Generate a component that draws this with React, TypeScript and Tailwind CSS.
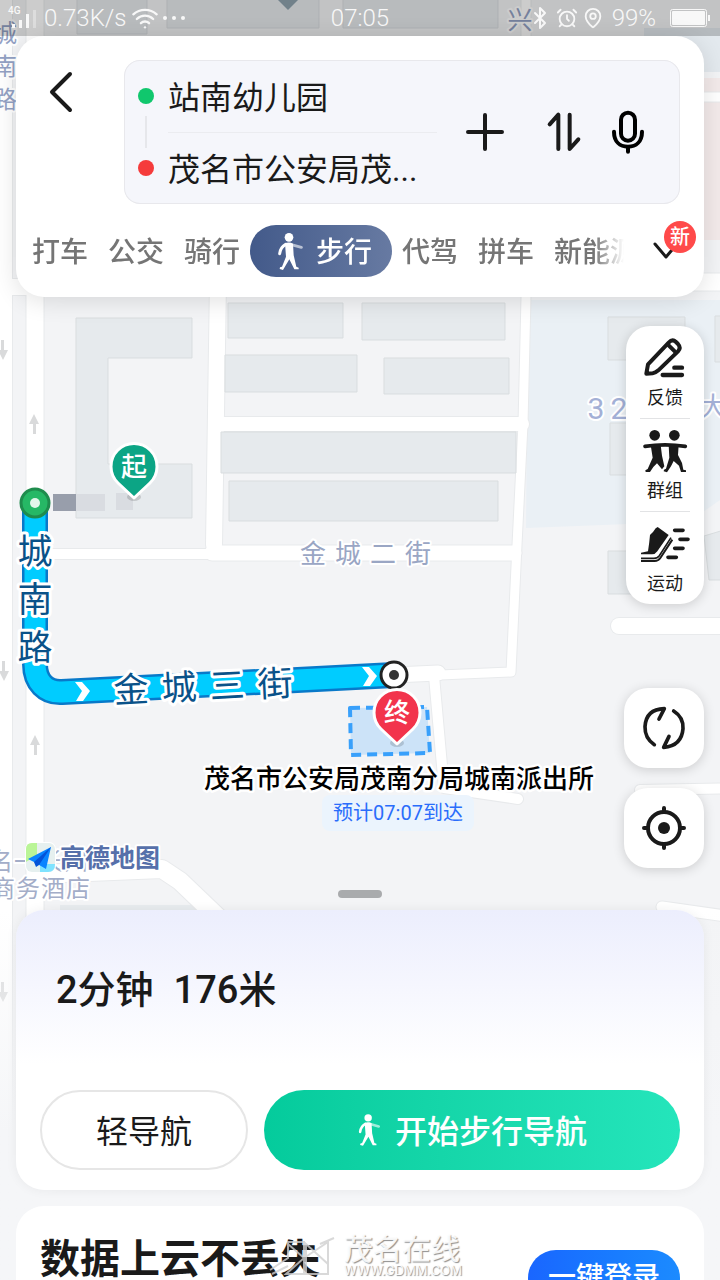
import clsx from 'clsx'
import { AlarmClock, Bluetooth, MapPin, Wifi } from 'lucide-react'
import { useState, type ReactNode } from 'react'

const BUILDINGS = [
  'M77 -10h70v44h-70z',
  'M167 -10h152v38h-152z',
  'M343 -10h155v38h-155z',
  'M76 318h116v40h-84v106h84v54h-116z',
  'M228 303h115v35h-115z',
  'M225 355h132v37h-132z',
  'M362 303h143v37h-143z',
  'M384 358h125v36h-125z',
  'M221 432h295v41h-295z',
  'M229 481h269v40h-269z',
  'M608 317h77v43h-77z',
  'M715 316h20v46h-20z',
  'M610 423h60v52h-60z',
  'M608 551h60v43h-60z',
  'M704 536l20 -6v50h-15z',
]

const ROADS = [
  { d: 'M3 -10V1300', width: 18 },
  { d: 'M35 -10V1300', width: 17 },
  { d: 'M-10 287H40', width: 16 },
  { d: 'M40 554H215', width: 10 },
  { d: 'M218 280L214 545', width: 16 },
  { d: 'M212 553H514', width: 15 },
  { d: 'M222 424H522', width: 14 },
  { d: 'M526 -10L526 297L523 424L517 545L511 672L440 675', width: 9 },
  { d: 'M394 675L438 673', width: 15 },
  { d: 'M434 676L444 788L518 799', width: 10 },
  { d: 'M619 626H740', width: 16 },
  { d: 'M640 790L740 788', width: 10 },
  { d: 'M662 907L740 918', width: 11 },
  { d: 'M690 282H740', width: 17 },
  { d: 'M690 97H740', width: 9 },
  { d: 'M40 874L162 869L180 881L225 924', width: 18 },
]

const MODES = ['打车', '公交', '骑行', '步行', '代驾', '拼车', '新能源']

export default function App() {
  return (
    <div className="relative flex h-screen flex-col overflow-hidden bg-[#f5f6f8] font-['Roboto','Noto_Sans_CJK_SC',sans-serif] text-[#1a1a1a]">
      <MapLayer />
      <StatusBar />
      <RouteHeader />
      <main className="relative flex min-h-0 flex-1 flex-col items-end px-4 pt-[29px]">
        <ToolPanel />
        <div className="mt-auto mb-[22px] flex flex-col gap-5">
          <MapButton label="刷新路线">
            <svg viewBox="120 312 144 144" className="size-12 fill-none stroke-current" strokeWidth="11" strokeLinecap="round" strokeLinejoin="round">
              <path d="M163 434Q134 415 135 380Q138 328 193 326L177 357" />
              <path d="M221 333Q251 352 249 386Q245 438 191 442L207 409" />
            </svg>
          </MapButton>
          <MapButton label="定位">
            <svg viewBox="120 612 144 144" className="size-12 fill-none stroke-current" strokeWidth="12" strokeLinecap="round">
              <circle cx="192" cy="684" r="48" />
              <circle cx="192" cy="684" r="18" className="fill-current" stroke="none" />
              <path d="M192 624v10M192 734v10M132 684h10M242 684h10" />
            </svg>
          </MapButton>
        </div>
        <div className="mb-3 h-2 w-11 self-center rounded-full bg-[#a9abad]" />
      </main>
      <div className="relative flex flex-col gap-4 bg-linear-to-b from-transparent to-[#f5f6f8] to-60% px-4">
        <RouteSummary />
        <CloudBackup />
      </div>
      <Watermark />
    </div>
  )
}

function StatusBar() {
  return (
    <header className="relative flex h-9 shrink-0 items-center bg-black/20 pr-2 pl-2 text-2xl font-light text-[#f8f8f8]">
      <div className="flex flex-1 items-center gap-2">
        <div className="relative flex h-5 items-end gap-1">
          <span className="absolute -top-0.5 left-0 text-[10px] leading-none font-medium">4G</span>
          <span className="ml-1 h-1 w-[3px] bg-current" />
          <span className="h-2 w-[3px] bg-current" />
          <span className="h-3.5 w-[3px] bg-current" />
          <span className="h-4.5 w-[3px] bg-current opacity-40" />
        </div>
        <span>0.73K/s</span>
        <Wifi className="-mx-1 size-7" strokeWidth={2} />
        <span className="flex gap-[5px]">
          <i className="size-1 rounded-full bg-current" />
          <i className="size-1 rounded-full bg-current" />
          <i className="size-1 rounded-full bg-current" />
        </span>
      </div>
      <time>07:05</time>
      <div className="flex flex-1 items-center justify-end gap-1">
        <Bluetooth className="size-6" strokeWidth={2} />
        <AlarmClock className="size-[22px]" strokeWidth={2} />
        <MapPin className="mr-1 size-[22px]" strokeWidth={2} />
        <span>99%</span>
        <svg viewBox="0 0 40 18" className="mr-0.5 ml-2.5 h-[18px] w-10">
          <rect x="0.5" y="0.5" width="36" height="17" rx="2" fill="none" stroke="currentColor" />
          <rect x="2" y="2" width="33" height="14" rx="1" fill="currentColor" />
          <path d="M38 6h2v6h-2z" fill="currentColor" />
        </svg>
      </div>
    </header>
  )
}

function RouteHeader() {
  const [mode, setMode] = useState('步行')
  return (
    <section className="relative mx-4 shrink-0 rounded-[28px] bg-white pt-6 pb-5 shadow-[0_4px_24px_rgba(0,0,0,0.12)]">
      <div className="flex items-start pr-6">
        <button aria-label="返回" className="flex h-16 w-[108px] shrink-0 items-center pl-8">
          <svg viewBox="0 0 26 42" className="h-[42px] w-[26px] fill-none stroke-current" strokeWidth="4" strokeLinecap="round" strokeLinejoin="round">
            <path d="M22 3L4 21L22 39" />
          </svg>
        </button>
        <div className="flex min-w-0 flex-1 items-center rounded-2xl bg-[#f5f6fb] pr-7 ring-1 ring-[#e8e8ec] ring-inset">
          <div className="relative min-w-0 flex-1 pl-3.5">
            <label className="flex h-18 items-center gap-3.5">
              <span className="size-4 shrink-0 rounded-full bg-[#10c76d]" />
              <input aria-label="起点" defaultValue="站南幼儿园" className="min-w-0 flex-1 bg-transparent pt-1 text-[32px] outline-none" />
            </label>
            <div className="absolute top-14 left-[21px] h-8 w-0.5 bg-[#e6e7eb]" />
            <div className="absolute top-18 right-6 left-11 h-px bg-[#ebecf0]" />
            <label className="flex h-18 items-center gap-3.5">
              <span className="size-4 shrink-0 rounded-full bg-[#f53b3b]" />
              <input aria-label="终点" defaultValue="茂名市公安局茂..." className="min-w-0 flex-1 bg-transparent pt-1 text-[32px] outline-none" />
            </label>
          </div>
          <button aria-label="添加途经点" className="mr-[31px]">
            <svg viewBox="303 324 144 144" className="size-12 fill-none stroke-current" strokeWidth="12" strokeLinecap="round">
              <path d="M324 396h102M375 345v102" />
            </svg>
          </button>
          <button aria-label="交换起终点" className="mr-4">
            <svg viewBox="541 324 144 144" className="size-12 fill-none stroke-current" strokeWidth="12" strokeLinecap="round" strokeLinejoin="round">
              <path d="M570 373L596 344V447M630 344V447L656 418" />
            </svg>
          </button>
          <button aria-label="语音输入" className="text-black">
            <svg viewBox="732 324 144 144" className="size-12 fill-none stroke-current" strokeWidth="12" strokeLinecap="round">
              <rect x="783" y="338" width="42" height="84" rx="21" />
              <path d="M762 395C762 425 780 440 804 440S846 425 846 395M804 442V455" />
            </svg>
          </button>
        </div>
      </div>
      <div className="mt-[21px] flex items-center">
        <nav role="tablist" className="flex min-w-0 flex-1 overflow-hidden mask-r-from-95% pl-1.5">
          {MODES.map((name) => (
            <button
              key={name}
              role="tab"
              aria-selected={name === mode}
              onClick={() => setMode(name)}
              className={clsx(
                'flex h-13 shrink-0 items-center text-[28px] font-medium whitespace-nowrap',
                name === mode ? 'gap-3 rounded-full bg-linear-to-r from-[#435a8a] to-[#677aa2] pr-5 pl-[26px] text-white' : 'px-2.5 text-[#757575]',
              )}
            >
              {name === mode && <WalkIcon className="h-[39px] w-7" />}
              <span className="pt-1">{name}</span>
            </button>
          ))}
        </nav>
        <button aria-label="更多出行方式" className="relative ml-6 h-13 w-14">
          <svg viewBox="0 0 28 18" className="ml-1 h-[18px] w-7 fill-none stroke-current" strokeWidth="3" strokeLinecap="round" strokeLinejoin="round">
            <path d="M3 2L14 15L25 2" />
          </svg>
          <span className="absolute -top-1 right-2 flex size-8 items-center justify-center rounded-full bg-[#ff4a4a] text-xl font-medium text-white">新</span>
        </button>
      </div>
    </section>
  )
}

function WalkIcon({ className }: { className?: string }) {
  return (
    <svg viewBox="831 96 84 117" className={className} fill="currentColor" aria-hidden="true">
      <circle cx="870" cy="112" r="13" />
      <path d="M874 133L907 142" stroke="currentColor" strokeWidth="9" strokeLinecap="round" opacity="0.6" />
      <path d="M860 133Q844 142 842 161" stroke="currentColor" strokeWidth="9" strokeLinecap="round" fill="none" />
      <path d="M858 130Q870 124 882 131L884 166L892 200L899 203V208H886L871 178L852 210L842 207L843 202L849 200L861 170Z" />
    </svg>
  )
}

function ToolPanel() {
  return (
    <div className="flex w-[78px] flex-col rounded-3xl bg-white shadow-[0_2px_12px_rgba(0,0,0,0.16)]">
      <ToolButton label="反馈">
        <svg viewBox="120 75 150 150" className="size-[50px] fill-none stroke-current" strokeWidth="12" strokeLinecap="round" strokeLinejoin="round">
          <path d="M139 194L144 166L206 101Q217 89 228 99L234 105Q244 116 234 127L175 184Q166 192 158 193Z" />
          <path d="M203 106L228 131" />
          <path d="M223 176H246M188 198H246" strokeWidth="13" />
        </svg>
      </ToolButton>
      <Divider />
      <ToolButton label="群组">
        <svg viewBox="120 354 150 150" className="size-[50px] fill-current">
          <circle cx="164" cy="379" r="16" />
          <circle cx="223" cy="379" r="16" />
          <path d="M135 412Q195 403 256 412" className="fill-none stroke-current" strokeWidth="11" strokeLinecap="round" />
          <path d="M152 408H182L186 440L193 472L186 481L171 463L160 474L150 489H137L136 484L143 480L158 446Z" />
          <path d="M206 408H236L234 438L246 462L250 482L258 484V489H243L237 470L221 456L213 472L201 490L191 487L192 482L198 479L208 446Z" />
        </svg>
      </ToolButton>
      <Divider />
      <ToolButton label="运动">
        <svg viewBox="120 633 150 150" className="size-[50px] fill-current">
          <path d="M173 654L206 678L172 727Q166 736 156 736H123V731L144 727Q148 702 150 678Q160 670 167 658Z" />
          <path d="M123 748H162Q172 748 178 740L213 686" className="fill-none stroke-current" strokeWidth="5" />
          <path d="M123 756H164Q175 756 181 747L217 692" className="fill-none stroke-current" strokeWidth="6" />
          <path d="M224 664H249M240 691H264M224 718H249M204 745H229" className="stroke-current" strokeWidth="11" strokeLinecap="round" />
        </svg>
      </ToolButton>
    </div>
  )
}

function Divider() {
  return <div className="mx-3.5 h-px bg-[#e2e3e5]" />
}

function ToolButton({ label, children }: { label: string; children: ReactNode }) {
  return (
    <button className="flex flex-col items-center pt-2 pb-1.5">
      {children}
      <span className="text-lg leading-7">{label}</span>
    </button>
  )
}

function MapButton({ label, children }: { label: string; children: ReactNode }) {
  return (
    <button aria-label={label} className="flex size-20 items-center justify-center rounded-3xl bg-white shadow-[0_2px_12px_rgba(0,0,0,0.16)]">
      {children}
    </button>
  )
}

function RouteSummary() {
  return (
    <section className="rounded-[28px] bg-linear-to-b from-[#eceefd] to-white to-55% px-6 pb-5 shadow-[0_0_12px_rgba(0,0,0,0.06)]">
      <h1 className="flex h-[180px] items-center gap-5 px-4 pb-5 text-[38px] font-medium">
        <span>2分钟</span>
        <span>176米</span>
      </h1>
      <div className="flex gap-4">
        <button className="h-20 w-52 rounded-full border-2 border-[#e6e6e6] bg-white pt-1 text-[32px]">轻导航</button>
        <button className="flex h-20 flex-1 items-center justify-center gap-3.5 rounded-full bg-linear-to-r from-[#04cb9c] to-[#24e5bb] text-[32px] font-medium text-white">
          <WalkIcon className="h-[34px] w-6" />
          <span className="pt-1">开始步行导航</span>
        </button>
      </div>
    </section>
  )
}

function CloudBackup() {
  return (
    <section className="flex h-[74px] items-start justify-between rounded-t-[28px] bg-white px-6">
      <h2 className="pt-7 text-[40px] leading-[52px] font-bold">数据上云不丢失</h2>
      <button className="mt-11 h-14 shrink-0 rounded-full bg-linear-to-r from-[#1a66ff] to-[#1c8bff] px-5 text-[28px] font-medium text-white">一键登录</button>
    </section>
  )
}

function Watermark() {
  return (
    <div className="pointer-events-none absolute bottom-1 left-[268px] flex items-end gap-1 text-white/90">
      <svg viewBox="0 0 72 40" className="h-10 w-[72px] fill-none stroke-[#d0d0d0]/80" strokeWidth="2">
        <path d="M2 34L20 22V6H36V38H18L36 22L60 6V38H38V8L60 28M4 38L20 30M36 22L20 8M52 8L66 2" />
      </svg>
      <div className="[text-shadow:1px_1px_1px_#8f8f8f]">
        <div className="text-[29px] leading-7 font-medium">茂名在线</div>
        <div className="font-['Inter'] text-[13px] leading-3">WWW.GDMM.COM</div>
      </div>
    </div>
  )
}

function MapLayer() {
  return (
    <svg viewBox="0 0 720 1280" preserveAspectRatio="xMidYMin slice" className="absolute inset-0 size-full" role="img" aria-label="地图">
      <rect width="720" height="1280" fill="#f3f4f6" />
      <path d="M528 300H720V500L700 514L680 522L526 528Z" fill="#eaf0f5" />
      <path d="M644 28H720V72H644Z" fill="#e3e9ee" />
      <path d="M690 78H720V240H690Z" fill="#f3eaea" />
      <path d="M60 905H200L215 940H60Z" fill="#e8ecef" />
      <g fill="none" strokeLinecap="round" strokeLinejoin="round">
        {ROADS.map((road) => <path key={road.d} d={road.d} stroke="#e8eaec" strokeWidth={road.width + 2} />)}
        {ROADS.map((road) => <path key={road.d} d={road.d} stroke="#ffffff" strokeWidth={road.width} />)}
      </g>
      <g fill="#e6eaed" stroke="#d9dddf">
        {BUILDINGS.map((d) => <path key={d} d={d} />)}
      </g>
      <path d="M274 -4L288 10L302 -4Z" fill="#8ea2ad" />

      <RoadArrow x={3} y={350} down />
      <RoadArrow x={34} y={424} />
      <RoadArrow x={4} y={671} down />
      <RoadArrow x={35} y={745} />
      <RoadArrow x={3} y={992} down />

      <path d="M53 494h23v17h-23z" fill="#989eab" />
      <path d="M76 494h29v17h-29zM116 493h17v17h-17z" fill="#d9dce1" />

      <path d="M350 708L427 707L430 753L351 755Z" fill="#cce3f8" stroke="#38a0fb" strokeWidth="4" strokeDasharray="10 6" strokeLinejoin="round" />

      <g fill="none" strokeLinejoin="round">
        <path d="M35 503V664C35 682 46 693 62 692L394 675" stroke="#0879c9" strokeWidth="26" />
        <path d="M35 503V664C35 682 46 693 62 692L394 675" stroke="#00ccff" strokeWidth="21" />
      </g>
      <path d="M75 682h7l8 9l-7 10h-7l6 -10zM362 667h7l8 9l-7 10h-7l6 -10z" fill="#ffffff" />

      <MapLabel chars="城南路" from={[5, 33]} step={[0, 33]} size={24} color="#93a1c4" />
      <MapLabel chars="兴" from={[520, 20]} step={[0, 0]} size={25} color="#93a1c4" />
      <MapLabel chars="32" from={[596, 408]} step={[23, 0]} size={30} color="#a3b0d6" />
      <MapLabel chars="大" from={[713, 406]} step={[0, 0]} size={26} color="#a3b0d6" />
      <MapLabel chars="金城二街" from={[313, 553]} step={[35, 0]} size={26} color="#9aa6c4" />
      <MapLabel chars="名一长州" from={[1, 861]} step={[25, 0]} size={24} color="#a3adc8" />
      <MapLabel chars="商务酒店" from={[3, 888]} step={[25, 0]} size={24} color="#a3adc8" />
      <MapLabel chars="城南路" from={[35, 551]} step={[0, 48]} size={35} color="#0a5289" />
      <MapLabel chars="金城三街" from={[131, 689]} step={[48, -2]} size={35} color="#0a5289" tilt={-3} />

      <circle cx="35" cy="503" r="14" fill="#26b865" stroke="#1f8c4d" strokeWidth="3" />
      <circle cx="35" cy="503" r="5" fill="#e4f6ea" />
      <circle cx="394" cy="675" r="13" fill="#ffffff" stroke="#222222" strokeWidth="3" />
      <circle cx="394" cy="675" r="5" fill="#333333" />
      <Pin x={134} y={466} color="#0ca585" text="起" />
      <Pin x={397} y={712} color="#f2344c" text="终" />

      <text x="399" y="788" textAnchor="middle" fontSize="26" fontWeight="500" fill="#000000" stroke="#ffffff" strokeWidth="5" strokeLinejoin="round" paintOrder="stroke">
        茂名市公安局茂南分局城南派出所
      </text>
      <rect x="322" y="795" width="152" height="36" rx="8" fill="#ebf4fd" />
      <text x="398" y="820" textAnchor="middle" fontSize="20" fill="#2a6dfb">预计07:07到达</text>

      <AmapLogo />
    </svg>
  )
}

type Point = [number, number]

// Map labels are spread along their road, one glyph per step.
function MapLabel({ chars, from, step, size, color, tilt = 0 }: { chars: string; from: Point; step: Point; size: number; color: string; tilt?: number }) {
  return (
    <g fontSize={size} fill={color} stroke="#ffffff" strokeWidth={size > 30 ? 6 : 4} strokeLinejoin="round" paintOrder="stroke" textAnchor="middle">
      {[...chars].map((char, i) => (
        <text key={i} y={Math.round(size * 0.37)} transform={`translate(${from[0] + step[0] * i} ${from[1] + step[1] * i}) rotate(${tilt})`}>{char}</text>
      ))}
    </g>
  )
}

function RoadArrow({ x, y, down }: { x: number; y: number; down?: boolean }) {
  return (
    <g transform={`translate(${x} ${y}) rotate(${down ? 180 : 0})`} fill="#d9dadb">
      <path d="M0 -10L5 0H-5ZM-1 0H2V10H-1Z" />
    </g>
  )
}

function Pin({ x, y, color, text }: { x: number; y: number; color: string; text: string }) {
  return (
    <g transform={`translate(${x} ${y})`}>
      <ellipse cx="0" cy="31" rx="7" ry="4" fill="#000000" opacity="0.15" />
      <path d="M0 32L-16 17A23 23 0 1 1 16 17Z" fill={color} stroke="#ffffff" strokeWidth="3" strokeLinejoin="round" />
      <text y="10" textAnchor="middle" fontSize="26" fontWeight="500" fill="#ffffff">{text}</text>
    </g>
  )
}

function AmapLogo() {
  return (
    <g>
      <rect x="25" y="842" width="31" height="31" rx="7" fill="#ffffff" />
      <rect x="26" y="843" width="29" height="29" rx="6" fill="#e6f0ef" />
      <path d="M37 843V855L26 862V849Q26 843 32 843Z" fill="#baf597" />
      <path d="M40 864H55Q55 872 48 872H40Z" fill="#7fe3ff" />
      <path d="M51 847L28 859L34 862L46 869Z" fill="#0a84ff" />
      <path d="M51 847L34 862L36 867L39 865Z" fill="#0553d8" />
      <text x="60" y="867" fontSize="25" fontWeight="700" fill="#5670aa" stroke="#ffffff" strokeWidth="4" strokeLinejoin="round" paintOrder="stroke">高德地图</text>
    </g>
  )
}
